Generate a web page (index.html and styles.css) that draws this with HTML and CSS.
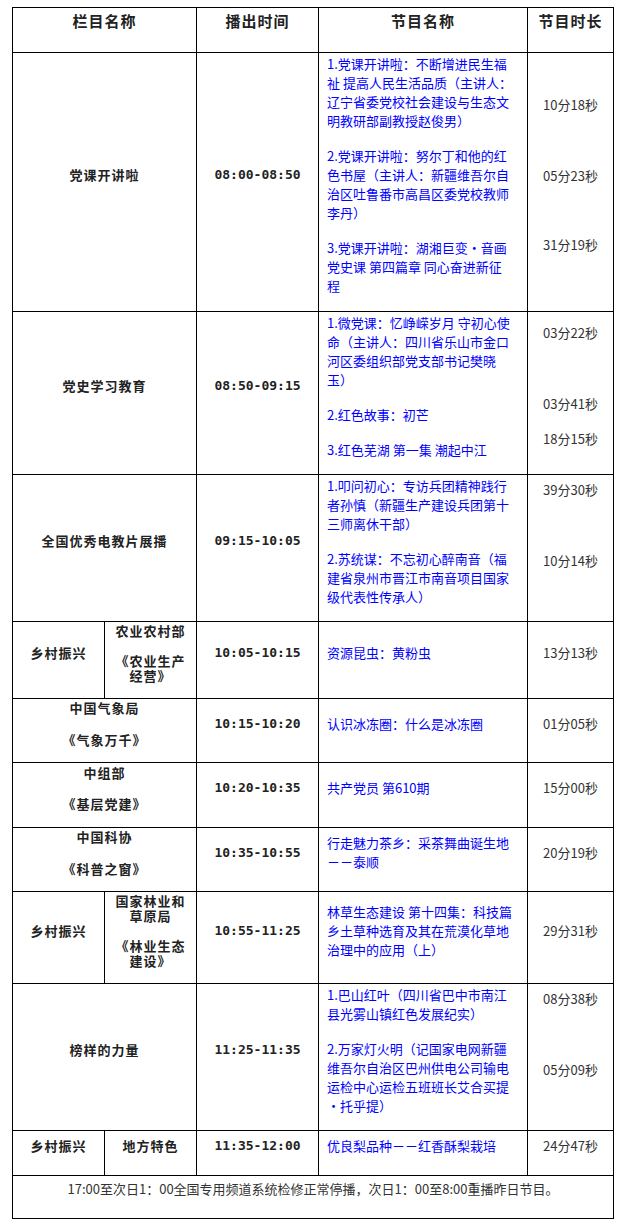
FILE: index.html
```html
<!DOCTYPE html>
<html lang="zh-CN">
<head>
<meta charset="utf-8">
<title>节目单</title>
<link rel="stylesheet" href="styles.css">
</head>
<body>
<table class="schedule">
  <colgroup>
    <col class="c-a"><col class="c-b"><col class="c-time"><col class="c-prog"><col class="c-dur">
  </colgroup>
  <thead>
    <tr class="head">
      <th colspan="2">栏目名称</th>
      <th>播出时间</th>
      <th>节目名称</th>
      <th>节目时长</th>
    </tr>
  </thead>
  <tbody>
    <tr>
      <td colspan="2" class="lab"><p>党课开讲啦</p></td>
      <td class="time">08:00-08:50</td>
      <td class="prog">
        <p>1.党课开讲啦：不断增进民生福<br>祉 提高人民生活品质（主讲人：<br>辽宁省委党校社会建设与生态文<br>明教研部副教授赵俊男）</p>
        <p>2.党课开讲啦：努尔丁和他的红<br>色书屋（主讲人：新疆维吾尔自<br>治区吐鲁番市高昌区委党校教师<br>李丹）</p>
        <p>3.党课开讲啦：湖湘巨变・音画<br>党史课 第四篇章 同心奋进新征<br>程</p>
      </td>
      <td class="dur stack r1"><p>10分18秒</p><p class="far">05分23秒</p><p class="far2">31分19秒</p></td>
    </tr>
    <tr>
      <td colspan="2" class="lab"><p>党史学习教育</p></td>
      <td class="time">08:50-09:15</td>
      <td class="prog">
        <p>1.微党课：忆峥嵘岁月 守初心使<br>命（主讲人：四川省乐山市金口<br>河区委组织部党支部书记樊晓<br>玉）</p>
        <p>2.红色故事：初芒</p>
        <p>3.红色芜湖 第一集 潮起中江</p>
      </td>
      <td class="dur stack r2"><p>03分22秒</p><p class="far">03分41秒</p><p>18分15秒</p></td>
    </tr>
    <tr>
      <td colspan="2" class="lab"><p>全国优秀电教片展播</p></td>
      <td class="time">09:15-10:05</td>
      <td class="prog tight">
        <p>1.叩问初心：专访兵团精神践行<br>者孙慎（新疆生产建设兵团第十<br>三师离休干部）</p>
        <p>2.苏统谋：不忘初心醉南音（福<br>建省泉州市晋江市南音项目国家<br>级代表性传承人）</p>
      </td>
      <td class="dur stack r3"><p>39分30秒</p><p class="far">10分14秒</p></td>
    </tr>
    <tr>
      <td class="lab"><p>乡村振兴</p></td>
      <td class="lab"><p>农业农村部</p><p>《农业生产<br>经营》</p></td>
      <td class="time">10:05-10:15</td>
      <td class="prog"><p>资源昆虫：黄粉虫</p></td>
      <td class="dur"><p>13分13秒</p></td>
    </tr>
    <tr class="pair">
      <td colspan="2" class="lab"><p>中国气象局</p><p>《气象万千》</p></td>
      <td class="time">10:15-10:20</td>
      <td class="prog"><p>认识冰冻圈：什么是冰冻圈</p></td>
      <td class="dur"><p>01分05秒</p></td>
    </tr>
    <tr class="pair">
      <td colspan="2" class="lab"><p>中组部</p><p>《基层党建》</p></td>
      <td class="time">10:20-10:35</td>
      <td class="prog"><p>共产党员 第610期</p></td>
      <td class="dur"><p>15分00秒</p></td>
    </tr>
    <tr class="pair">
      <td colspan="2" class="lab"><p>中国科协</p><p>《科普之窗》</p></td>
      <td class="time">10:35-10:55</td>
      <td class="prog"><p>行走魅力茶乡：采茶舞曲诞生地<br>－－泰顺</p></td>
      <td class="dur"><p>20分19秒</p></td>
    </tr>
    <tr>
      <td class="lab"><p>乡村振兴</p></td>
      <td class="lab"><p>国家林业和<br>草原局</p><p>《林业生态<br>建设》</p></td>
      <td class="time">10:55-11:25</td>
      <td class="prog"><p>林草生态建设 第十四集：科技篇<br>乡土草种选育及其在荒漠化草地<br>治理中的应用（上）</p></td>
      <td class="dur"><p>29分31秒</p></td>
    </tr>
    <tr>
      <td colspan="2" class="lab"><p>榜样的力量</p></td>
      <td class="time">11:25-11:35</td>
      <td class="prog tight">
        <p>1.巴山红叶（四川省巴中市南江<br>县光雾山镇红色发展纪实）</p>
        <p>2.万家灯火明（记国家电网新疆<br>维吾尔自治区巴州供电公司输电<br>运检中心运检五班班长艾合买提<br>・托乎提）</p>
      </td>
      <td class="dur stack r3"><p>08分38秒</p><p class="far">05分09秒</p></td>
    </tr>
    <tr class="short">
      <td class="lab"><p>乡村振兴</p></td>
      <td class="lab"><p>地方特色</p></td>
      <td class="time">11:35-12:00</td>
      <td class="prog"><p>优良梨品种－－红香酥梨栽培</p></td>
      <td class="dur"><p>24分47秒</p></td>
    </tr>
    <tr class="foot">
      <td colspan="5">17:00至次日1：00全国专用频道系统检修正常停播，次日1：00至8:00重播昨日节目。</td>
    </tr>
  </tbody>
</table>
</body>
</html>
```

FILE: styles.css
```css
html, body {
  background: #fff;
}

body {
  margin: 7px 0 0 12px;
  font-family: "Noto Sans CJK SC", "Noto Sans", sans-serif;
  font-size: 13px;
  color: #333;
}

p {
  margin: 0;
}

.schedule {
  border-collapse: collapse;
  table-layout: fixed;
  width: 601px;
}

.c-a { width: 92px; }
.c-b { width: 92px; }
.c-time { width: 122px; }
.c-prog { width: 209px; }
.c-dur { width: 86px; }

.schedule th,
.schedule td {
  border: 1px solid #000;
  padding: 1px 3px 15.5px;
  vertical-align: middle;
  text-align: center;
}

.schedule .head th {
  height: 45px;
  box-sizing: border-box;
  vertical-align: top;
  padding: 2px 3px 0;
  font-size: 15px;
  line-height: 22px;
  font-weight: bold;
  letter-spacing: 1px;
  color: #222;
}

.schedule .lab {
  font-weight: bold;
  letter-spacing: 1px;
  line-height: 15px;
  color: #222;
  white-space: nowrap;
  padding-bottom: 15px;
}

.lab p + p {
  margin-top: 15px;
}

.pair .lab p + p {
  margin-top: 16.5px;
}

.schedule .pair td {
  height: 47px;
}

.schedule .time {
  font-family: "DejaVu Sans Mono", "Liberation Mono", monospace;
  font-weight: bold;
  font-size: 13px;
  line-height: 19px;
  color: #222;
}

.schedule .prog {
  text-align: left;
  color: #0000ff;
  line-height: 19px;
  white-space: nowrap;
  padding-left: 8px;
  padding-right: 2px;
  padding-bottom: 15.5px;
}

.prog p + p {
  margin-top: 16px;
}

.schedule .prog.tight {
  padding-bottom: 14.5px;
}

.schedule .dur {
  line-height: 19px;
  color: #333;
}

.schedule .dur.stack {
  vertical-align: top;
}

.dur p + p {
  margin-top: 16px;
}

.dur p.far {
  margin-top: 52px;
}

.dur p.far2 {
  margin-top: 50px;
}

.schedule .dur.r1 { padding-top: 41.5px; }
.schedule .dur.r2 { padding-top: 11px; }
.schedule .dur.r3 { padding-top: 4.5px; }

.schedule .short td {
  height: 28px;
}

.schedule .foot td {
  height: 43px;
  box-sizing: border-box;
  vertical-align: top;
  padding: 2.5px 3px 0;
  line-height: 19px;
  color: #333;
}
```
